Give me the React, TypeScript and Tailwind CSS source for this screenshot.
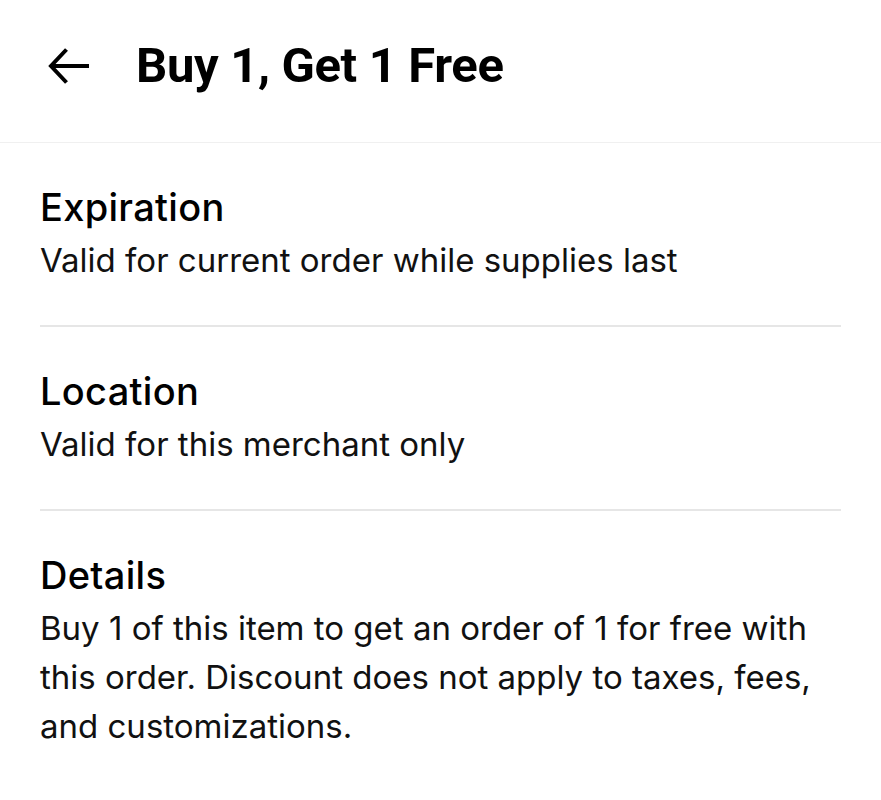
const sections = [
  { title: 'Expiration', body: 'Valid for current order while supplies last' },
  { title: 'Location', body: 'Valid for this merchant only' },
  {
    title: 'Details',
    body: 'Buy 1 of this item to get an order of 1 for free with this order. Discount does not apply to taxes, fees, and customizations.',
  },
];

function BackArrow() {
  return (
    <svg width="41" height="36" viewBox="0 0 41 36" fill="none" stroke="black" strokeWidth="4">
      <path d="M3 18H41" />
      <path d="M18.5 1.5L3 18l15.5 16.5" strokeLinejoin="miter" />
    </svg>
  );
}

export default function App() {
  return (
    <div className="min-h-screen bg-white text-black font-['Inter',_'Liberation_Sans',_sans-serif]">
      <header className="flex items-center gap-[47px] px-[48px] pt-[36px] pb-[46px] border-b border-[#f0f0f0]">
        <BackArrow />
        <h1 className="font-['Roboto',_sans-serif] font-bold text-[49px] leading-[60px] tracking-[-0.35px]">
          Buy 1, Get 1 Free
        </h1>
      </header>

      <div className="px-[40px]">
        {sections.map((s, i) => (
          <section
            key={s.title}
            className={`pt-[41px] pb-[40px] ${i < sections.length - 1 ? 'border-b-2 border-[#e6e6e6]' : ''}`}
          >
            <h2 className="text-[38px] leading-[46px] font-medium tracking-[0.3px]">{s.title}</h2>
            <p className="mt-[6px] text-[33px] leading-[49px] text-[#111]">{s.body}</p>
          </section>
        ))}
      </div>
    </div>
  );
}
